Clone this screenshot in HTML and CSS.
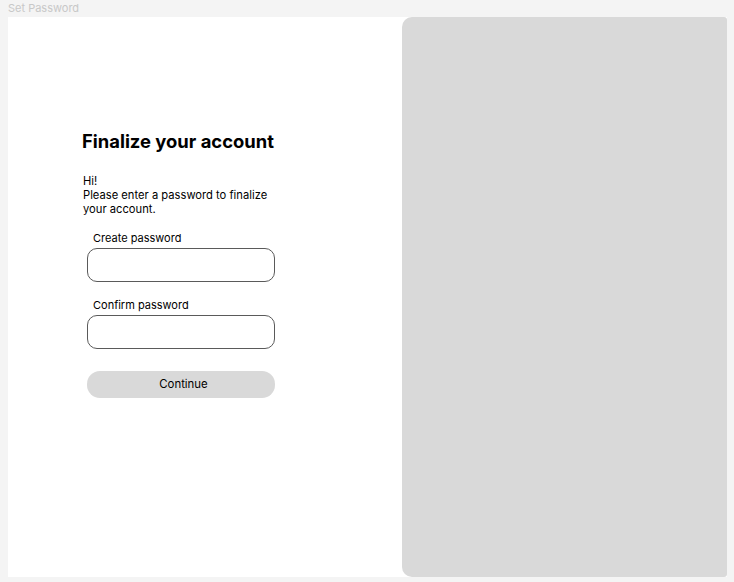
FILE: index.html
```html
<!DOCTYPE html>
<html>
<head>
<meta charset="utf-8">
<link rel="stylesheet" href="styles.css">
</head>
<body>
<div class="page-label">Set Password</div>
<div class="frame">
  <div class="left">
    <h1 class="title">Finalize your account</h1>
    <p class="intro">Hi!<br>Please enter a password to finalize your account.</p>
    <form class="form">
      <label class="label">Create password</label>
      <div class="input"></div>
      <label class="label label-second">Confirm password</label>
      <div class="input"></div>
      <div class="button">Continue</div>
    </form>
  </div>
  <div class="panel"></div>
</div>
</body>
</html>
```
FILE: styles.css
```css
html, body {
  margin: 0;
  padding: 0;
}
body {
  background: #f4f4f4;
  font-family: Inter, "Noto Sans", sans-serif;
  color: #000;
  width: 734px;
  height: 582px;
  overflow: hidden;
}
.page-label {
  height: 17px;
  padding-left: 8px;
  font-size: 11px;
  line-height: 17px;
  color: #c8c8c8;
  box-sizing: border-box;
}
.frame {
  margin-left: 8px;
  width: 719px;
  height: 560px;
  background: #fff;
  display: flex;
}
.left {
  width: 394px;
  padding-left: 74px;
  padding-top: 112px;
  box-sizing: border-box;
}
.title {
  margin: 0;
  font-size: 18.4px;
  line-height: 24px;
  font-weight: 700;
}
.intro {
  margin: 21px 0 0 1px;
  font-size: 11.2px;
  line-height: 14px;
  width: 194px;
}
.form {
  margin: 15px 0 0 5px;
  width: 188px;
  display: flex;
  flex-direction: column;
}
.label {
  display: block;
  font-size: 11px;
  line-height: 14px;
  padding-left: 6px;
  margin-bottom: 3px;
}
.label-second {
  margin-top: 16px;
}
.input {
  height: 34px;
  border: 1px solid #5a5a5a;
  border-radius: 10px;
  box-sizing: border-box;
}
.button {
  margin-top: 22px;
  height: 27px;
  border-radius: 13px;
  background: #d9d9d9;
  font-size: 11.4px;
  line-height: 27px;
  text-align: center;
  padding-left: 5px;
}
.panel {
  flex: 1;
  background: #d9d9d9;
  border-radius: 10px 3px 3px 10px;
}
```
